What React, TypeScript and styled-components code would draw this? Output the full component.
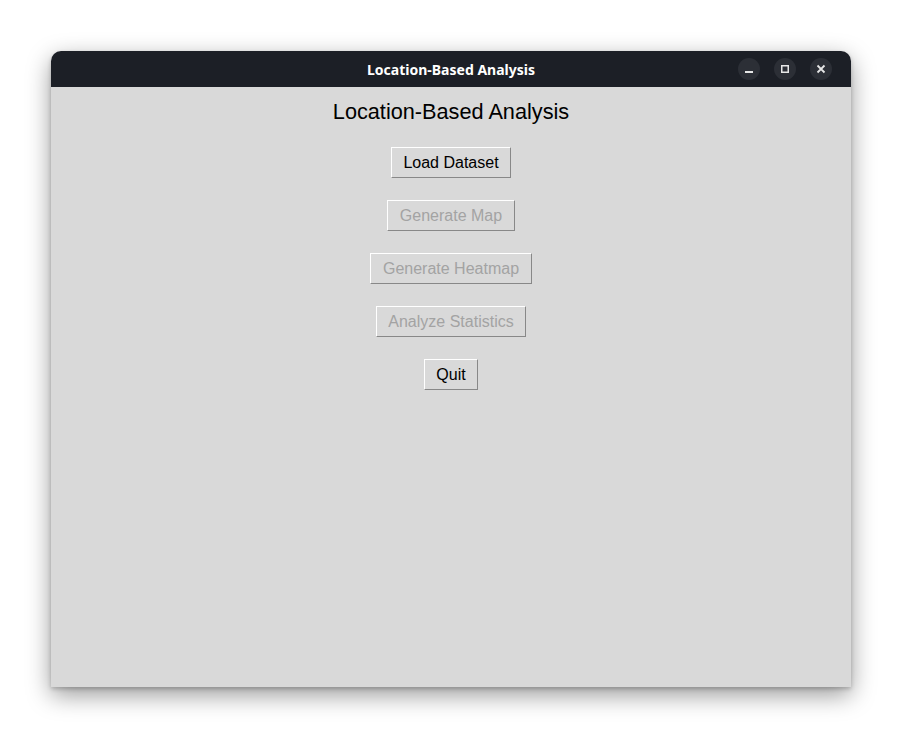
import React from 'react'
import styled, { createGlobalStyle } from 'styled-components'

const GlobalStyle = createGlobalStyle`
  html, body {
    margin: 0;
    padding: 0;
    background: #ffffff;
  }
`

const actions = [
  { label: 'Load Dataset', enabled: true },
  { label: 'Generate Map', enabled: false },
  { label: 'Generate Heatmap', enabled: false },
  { label: 'Analyze Statistics', enabled: false },
  { label: 'Quit', enabled: true },
]

export const App: React.FC = () => {
  return (
    <Page>
      <GlobalStyle />
      <Window>
        <TitleBar>
          <TitleText>Location-Based Analysis</TitleText>
          <WindowControls>
            <ControlButton aria-label="minimize">
              <svg width="10" height="10" viewBox="0 0 10 10">
                <rect x="1" y="7" width="8" height="2" fill="#e6e6e6" />
              </svg>
            </ControlButton>
            <ControlButton aria-label="maximize">
              <svg width="10" height="10" viewBox="0 0 10 10">
                <rect x="1.75" y="1.75" width="6.5" height="6.5" fill="none" stroke="#e6e6e6" strokeWidth="1.5" />
              </svg>
            </ControlButton>
            <ControlButton aria-label="close">
              <svg width="10" height="10" viewBox="0 0 10 10">
                <path d="M1.5 1.5 L8.5 8.5 M8.5 1.5 L1.5 8.5" stroke="#e6e6e6" strokeWidth="1.8" />
              </svg>
            </ControlButton>
          </WindowControls>
        </TitleBar>
        <Content>
          <Heading>Location-Based Analysis</Heading>
          <ButtonColumn>
            {actions.map((a) => (
              <TkButton key={a.label} disabled={!a.enabled} $enabled={a.enabled}>
                {a.label}
              </TkButton>
            ))}
          </ButtonColumn>
        </Content>
      </Window>
    </Page>
  )
}

const Page = styled.div`
  padding: 51px;
  width: 800px;
`

const Window = styled.div`
  width: 800px;
  display: flex;
  flex-direction: column;
  border-radius: 10px 10px 0 0;
  box-shadow: 0 8px 24px rgba(0, 0, 0, 0.4), 0 2px 4px rgba(0, 0, 0, 0.2);
`

const TitleBar = styled.div`
  height: 36px;
  background: #1c1f26;
  border-radius: 10px 10px 0 0;
  display: flex;
  align-items: center;
  justify-content: center;
  position: relative;
`

const TitleText = styled.div`
  color: #ffffff;
  font-family: 'Noto Sans', 'Open Sans', sans-serif;
  font-weight: 700;
  font-size: 14px;
`

const WindowControls = styled.div`
  position: absolute;
  right: 19px;
  top: 7px;
  display: flex;
  gap: 14px;
`

const ControlButton = styled.div`
  width: 22px;
  height: 22px;
  border-radius: 50%;
  background: #2c2f36;
  display: flex;
  align-items: center;
  justify-content: center;
`

const Content = styled.div`
  height: 600px;
  background: #d9d9d9;
  display: flex;
  flex-direction: column;
  align-items: center;
`

const Heading = styled.div`
  font-family: 'Liberation Sans', Arial, sans-serif;
  font-size: 21.7px;
  color: #000000;
  line-height: 24px;
  margin-top: 13px;
`

const ButtonColumn = styled.div`
  display: flex;
  flex-direction: column;
  align-items: center;
  gap: 22px;
  margin-top: 23px;
`

const TkButton = styled.button<{ $enabled: boolean }>`
  font-family: 'Liberation Sans', Arial, sans-serif;
  font-size: 16px;
  height: 31px;
  padding: 0 11.5px;
  background: #d9d9d9;
  color: ${(p) => (p.$enabled ? '#000000' : '#a3a3a3')};
  border-style: solid;
  border-width: 1px;
  border-color: #ffffff #888888 #888888 #ffffff;
  border-radius: 0;
  margin: 0;
  cursor: default;
`

export default App
